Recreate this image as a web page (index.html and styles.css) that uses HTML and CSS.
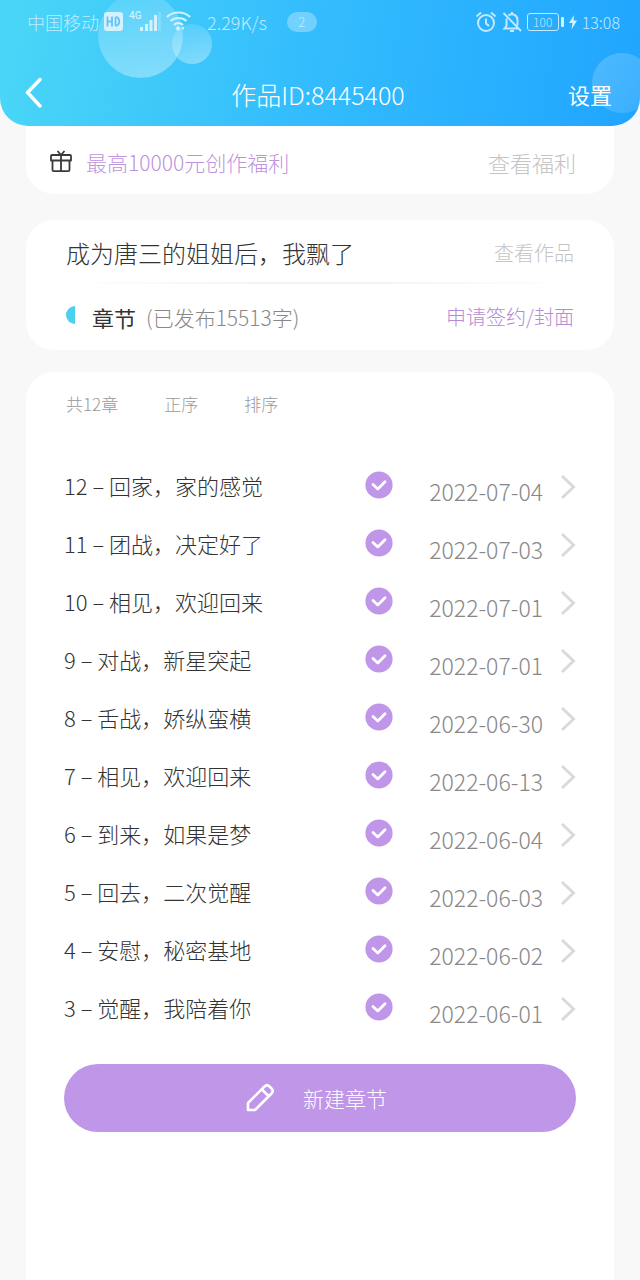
FILE: index.html
```html
<!DOCTYPE html>
<html lang="zh-CN">
<head>
  <meta charset="UTF-8">
  <meta name="viewport" content="width=device-width, initial-scale=1">
  <title>作品ID:8445400</title>
  <link rel="stylesheet" href="styles.css">
</head>
<body>
  <svg class="sprite" aria-hidden="true">
    <symbol id="icon-check" viewBox="0 0 28 28">
      <circle cx="14" cy="14" r="13.6" fill="#c096e8"/>
      <path d="M8 13.5l4.8 4.5L20 10.8" fill="none" stroke="#fff" stroke-width="2.8" stroke-linecap="round" stroke-linejoin="round"/>
    </symbol>
    <symbol id="icon-arrow" viewBox="0 0 16 26">
      <path d="M2 2l11.5 11L2 24" fill="none" stroke="#dadada" stroke-width="3"/>
    </symbol>
  </svg>

  <header class="header">
    <span class="bubble bubble-large"></span>
    <span class="bubble bubble-small"></span>
    <span class="bubble bubble-right"></span>

    <div class="status-bar">
      <div class="status-left">
        <span>中国移动</span>
        <svg class="status-signal" width="96" height="28" viewBox="0 0 96 28" aria-hidden="true">
          <rect x="5" y="4" width="19" height="19" rx="3" fill="#d3f2ff"/>
          <path d="M8.5 8.5v10M13 8.5v10M8.5 13.5H13M16.5 9.2v8.6M16.5 9.2c5 0 5 8.6 0 8.6" fill="none" stroke="#63c3f4" stroke-width="1.8"/>
          <text class="signal-label" x="30" y="11">4G</text>
          <g fill="#d3f2ff">
            <rect x="41" y="19" width="3" height="4"/>
            <rect x="46" y="16" width="3" height="7"/>
            <rect x="50.5" y="12" width="3" height="11"/>
            <rect x="55" y="7" width="3" height="16"/>
            <rect x="59" y="4" width="3" height="19" opacity=".25"/>
          </g>
          <g fill="none" stroke="#d3f2ff" stroke-width="2.2">
            <path d="M68 9c6-6 17-6 23 0M71.5 13c4.5-4 11.5-4 16 0M75 17c2.500-2.400 6.500-2.400 9 0"/>
          </g>
          <path d="M76.5 20.5l2.5-3 2.5 3-2.5 2.5zM82.5 19h3L84 22.5z" fill="#d3f2ff"/>
        </svg>
        <span class="status-speed">2.29K/s</span>
        <span class="status-count">2</span>
      </div>
      <div class="status-right">
        <svg width="22" height="22" viewBox="0 0 22 22" fill="none" stroke="#c3e9ff" stroke-width="2" aria-hidden="true">
          <circle cx="11" cy="12" r="8"/>
          <path d="M11 7.5v5l3 2.5M1.5 5.5L6 1.5M20.5 5.5L16 1.5"/>
        </svg>
        <svg width="22" height="22" viewBox="0 0 22 22" fill="none" stroke="#c3e9ff" stroke-width="2" aria-hidden="true">
          <path d="M2.5 2L20 20M5.5 7.5V15l-2 2.5H17M7.500 4.500c4-3 9 0 9 4.500v5.500M11 1v2M9 20h4"/>
        </svg>
        <span class="battery"><span class="battery-level">100</span></span>
        <svg width="10" height="18" viewBox="0 0 10 18" aria-hidden="true">
          <path d="M6 2L1 10h3.5l-1 6.5L9 7.5H5.5z" fill="#d3f2ff"/>
        </svg>
        <span class="status-time">13:08</span>
      </div>
    </div>

    <nav class="nav-bar">
      <button type="button" class="back-button" aria-label="返回">
        <svg width="20" height="32" viewBox="0 0 20 32" aria-hidden="true">
          <path d="M16 1.5L3.5 14.500 16 28" fill="none" stroke="#fff" stroke-width="3.4" stroke-linecap="round" stroke-linejoin="round"/>
        </svg>
      </button>
      <h1 class="nav-title">作品ID:8445400</h1>
      <a href="#settings" class="nav-settings">设置</a>
    </nav>
  </header>

  <main class="content">
    <section class="card benefit-card">
      <svg width="22" height="24" viewBox="0 0 22 24" fill="none" stroke="#3a3a3a" stroke-width="1.8" stroke-linejoin="round" aria-hidden="true">
        <path d="M2 5h18c.6 0 1 .4 1 1v4.5H1V6c0-.6.4-1 1-1zM2.5 10.5V20c0 .8.4 1.2 1.2 1.2h14.6c.8 0 1.2-.4 1.2-1.2v-9.5M11 5v16M7.5 1L11 5l3.5-4"/>
      </svg>
      <a href="#benefit" class="benefit-text">最高10000元创作福利</a>
      <a href="#benefit" class="benefit-link">查看福利</a>
    </section>

    <section class="card work-card">
      <div class="work-row work-row-top">
        <h2 class="work-title">成为唐三的姐姐后，我飘了</h2>
        <a href="#work" class="work-link">查看作品</a>
      </div>
      <div class="work-row">
        <span class="half-dot"></span>
        <h3 class="chapter-heading">章节</h3>
        <span class="word-count">(已发布15513字)</span>
        <a href="#apply" class="apply-link">申请签约/封面</a>
      </div>
    </section>

    <section class="card list-card">
      <div class="list-tools">
        <span class="list-total">共12章</span>
        <button type="button" class="tool-button">正序</button>
        <button type="button" class="tool-button">排序</button>
      </div>

      <ul class="chapter-list">
        <li><a href="#c12" class="chapter">
          <span class="chapter-name">12 – 回家，家的感觉</span>
          <svg class="chapter-check"><use href="#icon-check"/></svg>
          <time class="chapter-date">2022-07-04</time>
          <svg class="chapter-arrow"><use href="#icon-arrow"/></svg>
        </a></li>
        <li><a href="#c11" class="chapter">
          <span class="chapter-name">11 – 团战，决定好了</span>
          <svg class="chapter-check"><use href="#icon-check"/></svg>
          <time class="chapter-date">2022-07-03</time>
          <svg class="chapter-arrow"><use href="#icon-arrow"/></svg>
        </a></li>
        <li><a href="#c10" class="chapter">
          <span class="chapter-name">10 – 相见，欢迎回来</span>
          <svg class="chapter-check"><use href="#icon-check"/></svg>
          <time class="chapter-date">2022-07-01</time>
          <svg class="chapter-arrow"><use href="#icon-arrow"/></svg>
        </a></li>
        <li><a href="#c9" class="chapter">
          <span class="chapter-name">9 – 对战，新星突起</span>
          <svg class="chapter-check"><use href="#icon-check"/></svg>
          <time class="chapter-date">2022-07-01</time>
          <svg class="chapter-arrow"><use href="#icon-arrow"/></svg>
        </a></li>
        <li><a href="#c8" class="chapter">
          <span class="chapter-name">8 – 舌战，娇纵蛮横</span>
          <svg class="chapter-check"><use href="#icon-check"/></svg>
          <time class="chapter-date">2022-06-30</time>
          <svg class="chapter-arrow"><use href="#icon-arrow"/></svg>
        </a></li>
        <li><a href="#c7" class="chapter">
          <span class="chapter-name">7 – 相见，欢迎回来</span>
          <svg class="chapter-check"><use href="#icon-check"/></svg>
          <time class="chapter-date">2022-06-13</time>
          <svg class="chapter-arrow"><use href="#icon-arrow"/></svg>
        </a></li>
        <li><a href="#c6" class="chapter">
          <span class="chapter-name">6 – 到来，如果是梦</span>
          <svg class="chapter-check"><use href="#icon-check"/></svg>
          <time class="chapter-date">2022-06-04</time>
          <svg class="chapter-arrow"><use href="#icon-arrow"/></svg>
        </a></li>
        <li><a href="#c5" class="chapter">
          <span class="chapter-name">5 – 回去，二次觉醒</span>
          <svg class="chapter-check"><use href="#icon-check"/></svg>
          <time class="chapter-date">2022-06-03</time>
          <svg class="chapter-arrow"><use href="#icon-arrow"/></svg>
        </a></li>
        <li><a href="#c4" class="chapter">
          <span class="chapter-name">4 – 安慰，秘密基地</span>
          <svg class="chapter-check"><use href="#icon-check"/></svg>
          <time class="chapter-date">2022-06-02</time>
          <svg class="chapter-arrow"><use href="#icon-arrow"/></svg>
        </a></li>
        <li><a href="#c3" class="chapter">
          <span class="chapter-name">3 – 觉醒，我陪着你</span>
          <svg class="chapter-check"><use href="#icon-check"/></svg>
          <time class="chapter-date">2022-06-01</time>
          <svg class="chapter-arrow"><use href="#icon-arrow"/></svg>
        </a></li>
      </ul>

      <button type="button" class="new-chapter">
        <svg width="30" height="30" viewBox="0 0 30 30" fill="none" stroke="#fff" stroke-width="2.6" stroke-linejoin="round" aria-hidden="true">
          <path d="M3 27v-7L19.5 3.5c1.5-1.5 3.5-1.5 5 0l2 2c1.5 1.5 1.5 3.5 0 5L10 27zM17 6.5l6.5 6.5"/>
        </svg>
        <span>新建章节</span>
      </button>
    </section>
  </main>
</body>
</html>
```
FILE: styles.css
```css
* {
  box-sizing: border-box;
}

body {
  margin: 0;
  min-height: 100vh;
  display: flex;
  flex-direction: column;
  background: #f8f8f8;
  color: #333;
  font-family: "Noto Sans CJK SC", sans-serif;
  font-weight: 300;
  font-size: 20px;
  line-height: 28px;
}

a {
  color: inherit;
  text-decoration: none;
}

button {
  font: inherit;
  color: inherit;
  background: none;
  border: 0;
  padding: 0;
  cursor: pointer;
}

h1, h2, h3 {
  margin: 0;
  font-weight: 300;
}

svg {
  display: block;
  flex: none;
}

.sprite {
  position: absolute;
  width: 0;
  height: 0;
}

/* Header */
.header {
  position: relative;
  overflow: hidden;
  height: 126px;
  padding-top: 8px;
  border-radius: 0 0 28px 28px;
  background: linear-gradient(100deg, #4ad7f6 0%, #35befd 45%, #20a5ff 100%);
  color: #fff;
}

.bubble {
  position: absolute;
  border-radius: 50%;
  background: linear-gradient(165deg, rgba(255, 255, 255, 0.1), rgba(255, 255, 255, 0.38));
}

.bubble-large {
  left: 98px;
  top: -7px;
  width: 85px;
  height: 85px;
}

.bubble-small {
  left: 172px;
  top: 24px;
  width: 40px;
  height: 40px;
}

.bubble-right {
  left: calc(100% - 48px);
  top: 53px;
  width: 60px;
  height: 60px;
  background: linear-gradient(135deg, rgba(255, 255, 255, 0.2), rgba(255, 255, 255, 0.1));
}

/* Phone status bar */
.status-bar {
  position: relative;
  display: flex;
  justify-content: space-between;
  padding: 0 20px 0 27px;
  color: #c3e9ff;
  font-size: 18px;
}

.status-left,
.status-right {
  display: flex;
  align-items: center;
}

.status-right {
  gap: 4px;
}

.signal-label {
  fill: #d3f2ff;
  font-family: Roboto, sans-serif;
  font-size: 10px;
  font-weight: 500;
}

.status-speed {
  margin-left: 12px;
}

.status-count {
  width: 30px;
  height: 20px;
  margin-left: 20px;
  border-radius: 10px;
  background: rgba(255, 255, 255, 0.3);
  font-size: 13px;
  line-height: 20px;
  text-align: center;
}

.battery {
  display: flex;
  align-items: center;
  gap: 2px;
}

.battery-level {
  width: 32px;
  height: 18px;
  border: 1px solid #c3e9ff;
  border-radius: 3px;
  font-size: 12px;
  line-height: 16px;
  text-align: center;
}

.battery::after {
  content: "";
  width: 3px;
  height: 10px;
  border-radius: 1px;
  background: #d3f2ff;
}

.status-time {
  font-size: 16px;
}

/* Title bar */
.nav-bar {
  position: relative;
  display: grid;
  grid-template-columns: 1fr auto 1fr;
  align-items: center;
  padding: 42px 28px 0 24px;
}

.back-button {
  justify-self: start;
}

.nav-title {
  font-size: 25px;
}

.nav-settings {
  justify-self: end;
  font-size: 22px;
  font-weight: 400;
}

/* Cards */
.content {
  flex: 1;
  display: flex;
  flex-direction: column;
  padding: 0 26px;
}

.card {
  background: #fff;
  border-radius: 28px;
}

.benefit-card {
  display: flex;
  align-items: center;
  height: 68px;
  padding: 4px 38px 0 24px;
  border-radius: 0 0 28px 28px;
}

.benefit-text {
  margin-left: 14px;
  color: #bd94dc;
  font-size: 21px;
}

.benefit-link {
  margin-left: auto;
  color: #c4c4c4;
  font-size: 22px;
}

.work-card {
  margin-top: 26px;
  padding: 4px 40px 0;
}

.work-row {
  display: flex;
  align-items: center;
  height: 66px;
}

.work-row-top {
  height: 60px;
  border-bottom: 2px solid;
  border-image: linear-gradient(to right, transparent, #f3f3f3 40%, #f3f3f3 60%, transparent) 1;
}

.work-title {
  font-size: 24px;
}

.work-link {
  margin-left: auto;
  color: #c4c4c4;
}

.half-dot {
  width: 9px;
  height: 18px;
  margin-bottom: 4px;
  border-radius: 9px 0 0 9px;
  background: #4bd1ee;
}

.chapter-heading {
  margin-left: 17px;
  font-size: 22px;
  font-weight: 400;
}

.word-count {
  margin-left: 10px;
  color: #888;
  font-size: 21px;
}

.apply-link {
  margin-left: auto;
  color: #b48cd6;
}

/* Chapter list */
.list-card {
  flex: 1;
  margin-top: 22px;
  padding: 18px 38px 40px;
  border-radius: 28px 28px 0 0;
}

.list-tools {
  display: flex;
  gap: 46px;
  padding-left: 2px;
  color: #999;
  font-size: 17px;
}

.chapter-list {
  margin: 40px 0 26px;
  padding: 0;
  list-style: none;
}

.chapter {
  display: grid;
  grid-template-columns: 1fr 28px 150px 33px;
  align-items: center;
  height: 58px;
}

.chapter-name {
  padding-bottom: 4px;
  font-size: 22px;
}

.chapter-check {
  width: 28px;
  height: 28px;
  margin-bottom: 4px;
}

.chapter-date {
  padding-top: 8px;
  color: #888;
  font-size: 23px;
}

.chapter-arrow {
  width: 16px;
  height: 26px;
}

.chapter-date,
.chapter-arrow {
  justify-self: end;
}

.new-chapter {
  display: flex;
  align-items: center;
  justify-content: center;
  gap: 28px;
  width: 100%;
  height: 68px;
  padding-right: 8px;
  border-radius: 34px;
  background: #c096e8;
  color: #fff;
  font-size: 21px;
}
```
